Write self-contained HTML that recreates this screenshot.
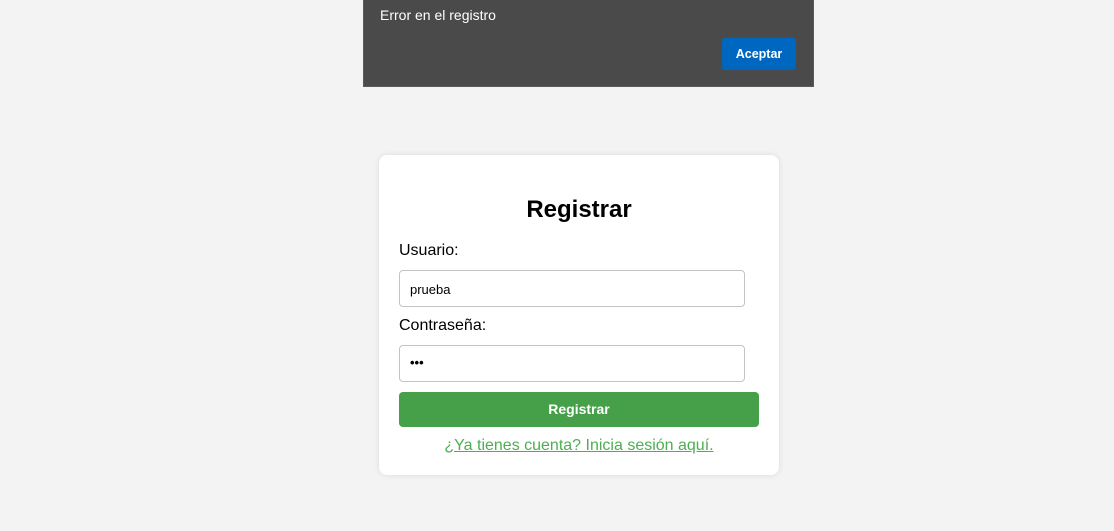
<!DOCTYPE html>
<html><head><meta charset="utf-8"><style>
body{margin:0;width:1114px;height:531px;background:#f3f3f3;font-family:"Liberation Sans",sans-serif;position:relative;overflow:hidden}
.dlg{position:absolute;left:363px;top:0;width:449px;height:86px;background:#4a4a4a;border:1px solid #5a5a5a;border-top:none}
.dlg .t{position:absolute;left:16px;top:7px;color:#fff;font-size:14px}
.dlg .b{position:absolute;left:358px;top:38px;width:74px;height:32px;background:#0067c0;border-radius:3px;color:#fff;font-size:12.5px;font-weight:bold;text-align:center;line-height:32px}
.card{position:absolute;left:379px;top:155px;width:400px;height:320px;background:#fff;border-radius:8px;box-shadow:0 0 6px rgba(0,0,0,.1)}
h2{position:absolute;left:0;width:400px;top:196px;margin:0;text-align:center;font-size:24px}
.lbl{position:absolute;left:399px;font-size:16px;color:#000}
.inp{position:absolute;left:399px;width:344px;height:35px;border:1px solid #c4c4c4;border-radius:4px;background:#fff;font-size:13px;box-sizing:content-box}
.inp span{position:absolute;left:10px;top:11px}
.btn{position:absolute;left:399px;top:392px;width:360px;height:35px;background:#46a049;border-radius:4px;color:#fff;font-size:14px;font-weight:bold;text-align:center;line-height:35px}
.lnk{position:absolute;left:379px;width:400px;top:437px;text-align:center;color:#4caf50;font-size:16px;text-decoration:underline}
</style></head><body>
<div class="dlg"><div class="t">Error en el registro</div><div class="b">Aceptar</div></div>
<div class="card"></div>
<h2 style="left:379px">Registrar</h2>
<div class="lbl" style="top:242px">Usuario:</div>
<div class="inp" style="top:270px"><span>prueba</span></div>
<div class="lbl" style="top:317px">Contraseña:</div>
<div class="inp" style="top:345px"><span style="top:9px;font-weight:bold">•••</span></div>
<div class="btn">Registrar</div>
<div class="lnk">¿Ya tienes cuenta? Inicia sesión aquí.</div>
</body></html>
